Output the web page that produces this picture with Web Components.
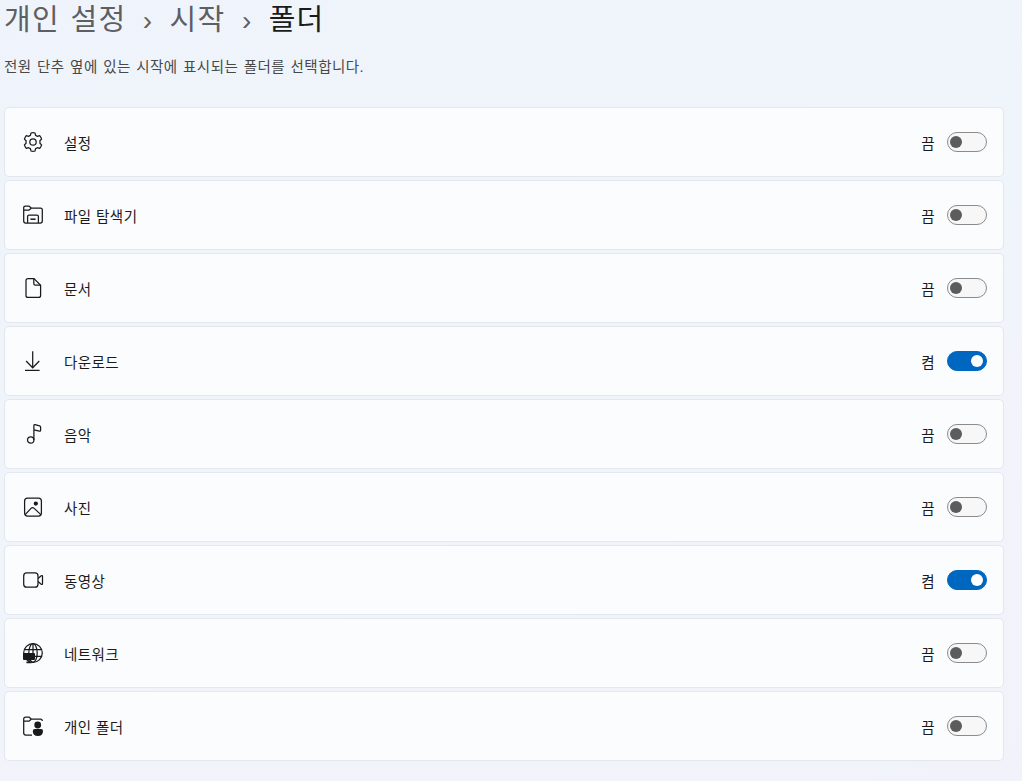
<!DOCTYPE html>
<html lang="ko">
<head>
<meta charset="utf-8">
<title>폴더</title>
<style>
  html, body { margin: 0; height: 100%; }
  body {
    background: linear-gradient(160deg, #eff4fc 0%, #f0f4fb 50%, #f2f3fa 100%);
    font-family: "Liberation Sans", "Noto Sans CJK KR", sans-serif;
    overflow: hidden;
  }
</style>
</head>
<body>
<settings-page>
  <page-header slot="header" description="전원 단추 옆에 있는 시작에 표시되는 폴더를 선택합니다.">
    <span slot="a">개인 설정</span>
    <span slot="b">시작</span>
    <span slot="c">폴더</span>
  </page-header>
  <folder-row icon="gear" state="off">설정</folder-row>
  <folder-row icon="explorer" state="off">파일 탐색기</folder-row>
  <folder-row icon="doc" state="off">문서</folder-row>
  <folder-row icon="download" state="on">다운로드</folder-row>
  <folder-row icon="music" state="off">음악</folder-row>
  <folder-row icon="picture" state="off">사진</folder-row>
  <folder-row icon="video" state="on">동영상</folder-row>
  <folder-row icon="network" state="off">네트워크</folder-row>
  <folder-row icon="personal" state="off">개인 폴더</folder-row>
</settings-page>

<script>
const ICONS = {
  gear: `<path d="M8 1 Q10 .4 12 1 L12.6 3.3 Q13.6 3.7 14.4 4.4 L16.7 3.7 Q18 5.2 18.6 7.1 L16.9 8.8 Q17.1 10 16.9 11.2 L18.6 12.9 Q18 14.8 16.7 16.3 L14.4 15.6 Q13.6 16.3 12.6 16.7 L12 19 Q10 19.6 8 19 L7.4 16.7 Q6.4 16.3 5.6 15.6 L3.3 16.3 Q2 14.8 1.4 12.9 L3.1 11.2 Q2.9 10 3.1 8.8 L1.4 7.1 Q2 5.2 3.3 3.7 L5.6 4.4 Q6.4 3.7 7.4 3.3 Z" stroke-linejoin="round"/><circle cx="10" cy="10" r="3.2"/>`,
  explorer: `<path d="M.7 16 V2.8 Q.7 1 2.5 1 H6 L8.2 3 H17.5 Q19.3 3 19.3 4.8 V16 Q19.3 18 17.3 18 H2.7 Q.7 18 .7 16 Z"/><path d="M.7 5.2 H6 L8.2 3.2"/><path d="M4.6 18 V11.6 Q4.6 10.2 6 10.2 H14 Q15.4 10.2 15.4 11.6 V18"/><path d="M7.4 14.2 H12.6" stroke-width="1.5"/>`,
  doc: `<path d="M5 .6 H11 L17.6 7.2 V17.4 Q17.6 19.4 15.6 19.4 H5 Q3 19.4 3 17.4 V2.6 Q3 .6 5 .6 Z"/><path d="M10.8 .8 V5.4 Q10.8 7 12.4 7 H17.4"/>`,
  download: `<path d="M9.7 .2 V16.6"/><path d="M3.1 10 L9.7 16.8 L16.3 10"/><path d="M2 19.4 H16.6"/>`,
  music: `<circle cx="7.7" cy="16" r="3.2"/><path d="M10.9 16 V1.6 Q10.9 .4 12.1 .7 L16.6 1.8 Q17.6 2.1 17.6 3.1 V6.2 Q17.6 7.4 16.4 7.1 L10.9 5.8"/>`,
  picture: `<rect x="1.6" y="1" width="16.8" height="18" rx="3"/><path d="M2.2 17.6 L8 11.4 Q9.6 10 11.2 11.4 L17.8 17.6"/><circle cx="12.8" cy="6.6" r="1.5" fill="#1a1a1a"/>`,
  video: `<rect x=".7" y="2.9" width="14.3" height="14.3" rx="3"/><path d="M15 8.4 L18.2 5.8 Q19.5 5 19.5 6.4 V13.6 Q19.5 15 18.2 14.2 L15 11.6"/>`,
  network: `<circle cx="10" cy="10" r="9.3"/><ellipse cx="10" cy="10" rx="4.2" ry="9.3"/><path d="M1.2 6.6 H18.8 M10 .8 V10 M12 13.4 H18.8"/><rect x="0" y="10" width="12" height="7" rx="1" fill="#1a1a1a" stroke="none"/><path d="M6 16.5 V19 M3.4 19.4 H8.6" stroke-width="1.6"/>`,
  personal: `<path d="M9 19 H2.8 Q.7 19 .7 17 V3 Q.7 1 2.8 1 H6 L8.2 3 H17.5 Q19.3 3 19.3 5"/><path d="M.7 5.2 H6 L8.2 3.2"/><circle cx="14.7" cy="9" r="3.4" fill="#1a1a1a" stroke="none"/><path d="M9.8 15 Q9.8 13 11.8 13 H18 Q20 13 20 15 Q20 20 14.9 20 Q9.8 20 9.8 15 Z" fill="#1a1a1a" stroke="none"/>`
};

class SettingsPage extends HTMLElement {
  constructor() {
    super();
    this.attachShadow({ mode: "open" });
    this.shadowRoot.innerHTML = `
      <style>
        :host { display: block; padding-left: 4px; width: 1000px; }
        .rows { display: flex; flex-direction: column; gap: 3px; }
      </style>
      <slot name="header"></slot>
      <div class="rows"><slot></slot></div>
    `;
  }
}

class PageHeader extends HTMLElement {
  constructor() {
    super();
    this.attachShadow({ mode: "open" });
    this.shadowRoot.innerHTML = `
      <style>
        :host { display: block; height: 107px; color: #5d5f62; }
        h1 {
          margin: 0; padding-top: 3px; height: 35px; display: flex; align-items: center;
          font-size: 29px; font-weight: 400; line-height: 35px; white-space: nowrap;
          letter-spacing: 1.2px; word-spacing: 1.5px;
        }
        .sep { font-size: 28px; margin: 0 17.5px 0 16.5px; letter-spacing: 0; }
        .cur { color: #1b1b1b; }
        p { margin: 19px 0 0; font-size: 14.5px; line-height: 20px; color: #484848; letter-spacing: .45px; word-spacing: 1px; }
      </style>
      <h1><slot name="a"></slot><span class="sep">›</span><slot name="b"></slot><span class="sep">›</span><span class="cur"><slot name="c"></slot></span></h1>
      <p>${this.getAttribute("description")}</p>
    `;
  }
}

class FolderRow extends HTMLElement {
  constructor() {
    super();
    this.attachShadow({ mode: "open" });
    const on = this.getAttribute("state") === "on";
    this.shadowRoot.innerHTML = `
      <style>
        :host {
          display: flex; align-items: center; height: 70px; box-sizing: border-box;
          background: rgba(255, 255, 255, .7); border: 1px solid #e3e7ee; border-radius: 5px;
          padding: 0 16px 0 18px; font-size: 14.5px; color: #1b1b1b; letter-spacing: .45px;
        }
        svg { width: 20px; height: 20px; fill: none; stroke: #1a1a1a; stroke-width: 1.25; flex: none; overflow: visible; }
        .label { margin-left: 21px; flex: 1; padding-top: 1px; }
        .state { margin-right: 12px; padding-top: 1px; }
        toggle-switch { flex: none; }
      </style>
      <svg viewBox="0 0 20 20">${ICONS[this.getAttribute("icon")]}</svg>
      <span class="label"><slot></slot></span>
      <span class="state">${on ? "켬" : "끔"}</span>
      <toggle-switch ${on ? "on" : ""}></toggle-switch>
    `;
  }
}

class ToggleSwitch extends HTMLElement {
  constructor() {
    super();
    this.attachShadow({ mode: "open" });
    this.shadowRoot.innerHTML = `
      <style>
        :host {
          display: flex; align-items: center; width: 40px; height: 20px; box-sizing: border-box;
          padding: 0 4px 0 2px; border-radius: 10px; background: #f7f7f8; border: 1px solid #8b8b8b;
        }
        :host([on]) { background: #0067c0; border-color: #0067c0; justify-content: flex-end; padding: 0 3px; }
        i { display: block; width: 12px; height: 12px; border-radius: 50%; background: #5c5c5c; }
        :host([on]) i { background: #fff; }
      </style>
      <i></i>
    `;
  }
}

customElements.define("toggle-switch", ToggleSwitch);
customElements.define("folder-row", FolderRow);
customElements.define("page-header", PageHeader);
customElements.define("settings-page", SettingsPage);
</script>
</body>
</html>
